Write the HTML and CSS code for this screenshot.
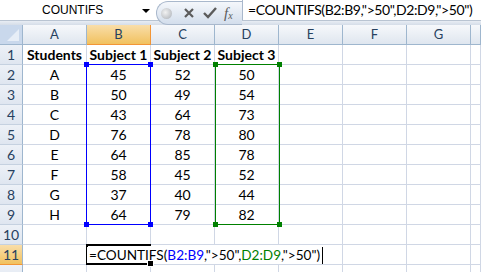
FILE: index.html
```html
<!DOCTYPE html>
<html lang="en">
<head>
    <meta charset="UTF-8">
    <title>COUNTIFS</title>
    <link rel="stylesheet" href="styles.css">
</head>
<body>
    <!-- Formula bar -->
    <div class="formula-bar">
        <div class="name-box">
            <span class="name-text">COUNTIFS</span>
            <span class="drop-arrow"></span>
        </div>
        <div class="fx-buttons">
            <span class="knob"></span>
            <svg class="btn-icon" width="14" height="14" viewBox="0 0 14 14">
                <path d="M3 3 L11 11 M11 3 L3 11" stroke="#5b5b5b" stroke-width="2.2" fill="none"/>
            </svg>
            <svg class="btn-icon" width="16" height="14" viewBox="0 0 16 14">
                <path d="M2 7 L6 11 L14 2" stroke="#5b5b5b" stroke-width="2.4" fill="none"/>
            </svg>
            <span class="fx">f<sub>x</sub></span>
        </div>
        <div class="formula-input">=COUNTIFS(B2:B9,"&gt;50",D2:D9,"&gt;50")</div>
    </div>
    <div class="band"></div>

    <!-- Sheet grid -->
    <div class="sheet" id="sheet">
        <div class="corner">
            <svg width="22" height="19" viewBox="0 0 22 19">
                <path d="M19 4 L19 16 L7 16 Z" fill="#e7eef7"/>
            </svg>
        </div>
    </div>

    <div class="range range-blue">
        <i class="h tl"></i><i class="h tr"></i><i class="h bl"></i><i class="h br"></i>
    </div>
    <div class="range range-green">
        <i class="h tl"></i><i class="h tr"></i><i class="h bl"></i><i class="h br"></i>
    </div>

    <script>
        const cols = ['A', 'B', 'C', 'D', 'E', 'F', 'G', ''];
        const data = [
            ['Students', 'Subject 1', 'Subject 2', 'Subject 3'],
            ['A', 45, 52, 50],
            ['B', 50, 49, 54],
            ['C', 43, 64, 73],
            ['D', 76, 78, 80],
            ['E', 64, 85, 78],
            ['F', 58, 45, 52],
            ['G', 37, 40, 44],
            ['H', 64, 79, 82]
        ];
        const sheet = document.getElementById('sheet');

        function cell(cls, text) {
            const d = document.createElement('div');
            d.className = cls;
            d.textContent = text;
            sheet.appendChild(d);
            return d;
        }

        // column headers
        cols.forEach(c => cell('col-head' + (c === 'B' ? ' active' : ''), c));

        // rows 1-12 (row 12 is only partly visible)
        for (let r = 1; r <= 12; r++) {
            cell('row-head' + (r === 11 ? ' active' : ''), r < 12 ? r : '');
            if (r === 11) {
                cell('cell', '');
                const f = cell('cell formula-cell', '');
                f.innerHTML = '<span class="active-box"></span><span class="edit">=COUNTIFS(<span class="ref-b">B2:B9</span>,"&gt;50",<span class="ref-d">D2:D9</span>,"&gt;50")<span class="caret"></span></span>';
                for (let c = 5; c < cols.length; c++) cell('cell', '');
                continue;
            }
            const row = data[r - 1] || [];
            for (let c = 0; c < cols.length; c++) {
                const v = row[c] !== undefined ? row[c] : '';
                cell('cell' + (r === 1 ? ' bold' : ''), v);
            }
        }
    </script>
</body>
</html>
```

FILE: styles.css
```css
/* General */
body {
    margin: 0;
    width: 481px;
    height: 272px;
    overflow: hidden;
    background: #ffffff;
    font-family: Lato, 'Open Sans', sans-serif;
    position: relative;
}

/* Formula bar */
.formula-bar {
    display: flex;
    height: 20px;
    background: #ffffff;
    border-bottom: 1px solid #b9c4d2;
}

.name-box {
    width: 156px;
    flex-shrink: 0;
    display: flex;
    align-items: center;
    position: relative;
}

.name-text {
    font-family: 'Liberation Sans', sans-serif;
    font-size: 12px;
    margin-left: 42px;
    color: #000;
}

.drop-arrow {
    position: absolute;
    left: 142px;
    top: 9px;
    border-left: 4px solid transparent;
    border-right: 4px solid transparent;
    border-top: 4px solid #000;
}

.fx-buttons {
    width: 86px;
    flex-shrink: 0;
    height: 24px;
    margin-top: 1px;
    border-radius: 12px 0 0 12px;
    background: linear-gradient(#f4f7fb, #d3deec);
    border: 1px solid #a9b8cc;
    border-right: none;
    display: flex;
    align-items: center;
    gap: 6px;
    padding-left: 4px;
    box-sizing: border-box;
    z-index: 1;
}

.knob {
    width: 11px;
    height: 11px;
    border-radius: 50%;
    background: radial-gradient(circle at 40% 40%, #f2f2f2, #a9aeb5);
    margin-right: 4px;
}

.btn-icon {
    display: block;
}

.fx {
    font-family: 'Liberation Serif', serif;
    font-style: italic;
    font-size: 15px;
    color: #5b5b5b;
    line-height: 1;
}

.fx sub {
    font-size: 10px;
    vertical-align: -1px;
}

.formula-input {
    flex: 1;
    border-left: 1px solid #a9b8cc;
    font-size: 14px;
    letter-spacing: -0.4px;
    line-height: 20px;
    padding-left: 5px;
    white-space: nowrap;
    color: #000;
}

.band {
    height: 4px;
    background: linear-gradient(#e8edf4, #d5dde8);
}

/* Sheet */
.sheet {
    display: grid;
    grid-template-columns: 23px repeat(7, 64px) 10px;
    grid-auto-rows: 20px;
}

.corner {
    background: #c9d8ec;
    border-right: 1px solid #9eb6ce;
    border-bottom: 1px solid #9eb6ce;
}

.corner svg {
    display: block;
}

.col-head {
    background: linear-gradient(#f6f8fb, #dfe6ef);
    border-right: 1px solid #9eb6ce;
    border-bottom: 1px solid #9eb6ce;
    color: #27415f;
    font-size: 13px;
    text-align: center;
    line-height: 19px;
}

.col-head.active {
    background: linear-gradient(#f9dea9, #f1c15f);
    border-right-color: #f29536;
    border-bottom-color: #f29536;
}

.row-head {
    background: linear-gradient(#edf1f7, #dfe6f0);
    border-right: 1px solid #9eb6ce;
    border-bottom: 1px solid #c5d1e0;
    color: #27415f;
    font-size: 14px;
    text-align: center;
    line-height: 19px;
}

.row-head.active {
    background: linear-gradient(#f9dea9, #f1c15f);
    border-bottom-color: #f29536;
}

.cell {
    border-right: 1px solid #d0d7e5;
    border-bottom: 1px solid #d0d7e5;
    font-size: 14px;
    text-align: center;
    line-height: 19px;
    color: #000;
}

.cell.bold {
    font-weight: bold;
}

/* Active editing cell (B11), text runs across B-E */
.formula-cell {
    grid-column: span 4;
    position: relative;
    text-align: left;
    white-space: nowrap;
}

.edit {
    font-size: 13.6px;
    padding-left: 2px;
    position: relative;
    z-index: 2;
    background: #fff;
}

.ref-b {
    color: #0000ff;
}

.ref-d {
    color: #008000;
}

.caret {
    display: inline-block;
    width: 1px;
    height: 17px;
    background: #000;
    vertical-align: -4px;
    margin-left: 2px;
}

.active-box {
    position: absolute;
    left: -1px;
    top: -1px;
    width: 63px;
    height: 17px;
    border: 2px solid #000;
    border-right: none;
}

.active-box::after {
    content: '';
    position: absolute;
    right: -3px;
    bottom: -4px;
    width: 5px;
    height: 5px;
    background: #000;
    border: 1px solid #fff;
    z-index: 3;
}

/* Highlighted ranges */
.range {
    position: absolute;
    top: 64px;
    width: 63px;
    height: 159px;
    border: 1px solid;
}

.range-blue {
    left: 86px;
    border-color: #0000ff;
}

.range-green {
    left: 215px;
    border-color: #008000;
}

.h {
    position: absolute;
    width: 5px;
    height: 5px;
}

.range-blue .h {
    background: #0000ff;
}

.range-green .h {
    background: #008000;
}

.tl { left: -3px; top: -3px; }
.tr { right: -3px; top: -3px; }
.bl { left: -3px; bottom: -3px; }
.br { right: -3px; bottom: -3px; }
```
